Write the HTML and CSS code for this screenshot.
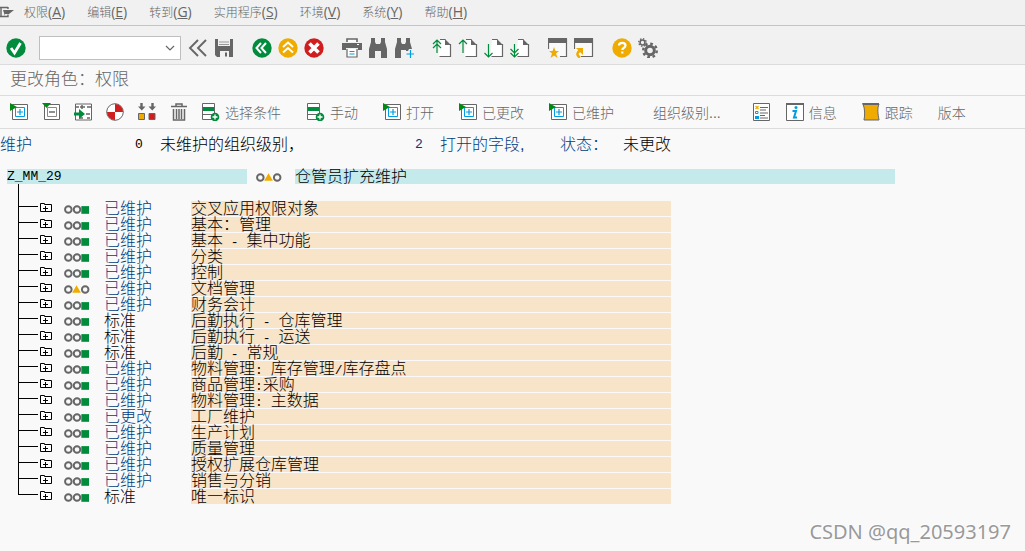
FILE: index.html
```html
<!DOCTYPE html>
<html lang="zh-CN">
<head>
<meta charset="utf-8">
<title>更改角色：权限</title>
<link rel="stylesheet" href="styles.css">
</head>
<body>
<svg class="defs" aria-hidden="true">
  <symbol id="doc" viewBox="0 0 20 20"><path d="M8 1.500h6l4.500 4.500v12.500H6.500" fill="#fff" stroke="none"/><path d="M8 1.500h5.500M18.500 6v12.500H7.500" fill="none" stroke="#666" stroke-width="1.200"/><path d="M13 1l6 6h-6z" fill="#666"/></symbol>
  <symbol id="box" viewBox="0 0 18 18"><path d="M2.500 1.500h15v15h-15z" fill="#fff" stroke="#666"/><path d="M5.500 4.500h9v9h-9z" fill="#fff" stroke="#009de0"/><path d="M10 6v6M7 9h6" stroke="#009de0" stroke-width="1.200"/><path d="M0 0l7 4-7 4z" fill="#008a11"/></symbol>
  <symbol id="add" viewBox="0 0 18 18"><path d="M.5 .5h12v16H.5z" fill="#fff" stroke="#666"/><path d="M1 4h11v4H1z" fill="#008c3c"/><path d="M1 11.500h11" stroke="#666"/><circle cx="13" cy="14" r="4.300" fill="#008c3c"/><path d="M13 11.500v5M10.500 14h5" stroke="#fff" stroke-width="1.300"/></symbol>
  <symbol id="folder" viewBox="0 0 12 9"><path d="M.5 8.500v-8h4v1h7v7z" fill="#fff" stroke="#000"/><path d="M5.500 3v5M3 5.500h5" stroke="#000"/></symbol>
  <symbol id="green" viewBox="0 0 27 10"><g fill="none" stroke="#666" stroke-width="2"><circle cx="4.500" cy="5.500" r="3.400"/><circle cx="13.500" cy="5.500" r="3.400"/></g><path d="M18 2h8v8h-8z" fill="#008c3c"/></symbol>
  <symbol id="yellow" viewBox="0 0 27 10"><g fill="none" stroke="#666" stroke-width="2"><circle cx="4.500" cy="5.500" r="3.400"/><circle cx="22" cy="5.500" r="3.400"/></g><path d="M13 1l4.500 8h-9z" fill="#f0ab00"/></symbol>
</svg>

<nav class="menubar">
  <button class="sysmenu" aria-label="系统菜单"><svg width="14" height="12" viewBox="0 0 14 12"><path d="M0 1.500h8M0 10.500h8v-2M1 1v10M8 1v2" fill="none" stroke="#666" stroke-width="1.400"/><path d="M3 4h11L9 8H5v2z" fill="#666"/></svg></button>
  <button>权限<span>(<u>A</u>)</span></button>
  <button>编辑<span>(<u>E</u>)</span></button>
  <button>转到<span>(<u>G</u>)</span></button>
  <button>实用程序<span>(<u>S</u>)</span></button>
  <button>环境<span>(<u>V</u>)</span></button>
  <button>系统<span>(<u>Y</u>)</span></button>
  <button>帮助<span>(<u>H</u>)</span></button>
</nav>

<div class="toolbar">
  <button aria-label="确认"><svg viewBox="0 0 20 20"><circle cx="10" cy="10" r="9.700" fill="#008c3c"/><path d="M5 10l3.500 5L14.500 5" fill="none" stroke="#fff" stroke-width="2.800"/></svg></button>
  <div class="command">
    <input type="text" aria-label="命令">
    <svg viewBox="0 0 10 6"><path d="M1 1l4 4 4-4" fill="none" stroke="#666" stroke-width="1.200"/></svg>
  </div>
  <div class="group">
    <button aria-label="折叠"><svg viewBox="0 0 20 20"><path d="M10 2l-8 8 8 8M18 2l-8 8 8 8" fill="none" stroke="#666" stroke-width="1.900"/></svg></button>
    <button aria-label="保存"><svg viewBox="0 0 20 20"><path d="M1 1h18v18H3l-2-2z" fill="#666"/><path d="M4 1h12v7H4zM6 13h9v6H6z" fill="#f1f1f1"/><path d="M5 4h10M5 6.500h10" stroke="#999"/><path d="M11 14.500h2v4h-2z" fill="#666"/></svg></button>
  </div>
  <div class="group">
    <button aria-label="返回"><svg viewBox="0 0 20 20"><circle cx="10" cy="10" r="9.700" fill="#008c3c"/><path d="M9 5l-4.500 5L9 15M14 5l-4.500 5 4.500 5" fill="none" stroke="#fff" stroke-width="2"/></svg></button>
    <button aria-label="退出"><svg viewBox="0 0 20 20"><circle cx="10" cy="10" r="9.700" fill="#f0ab00"/><path d="M5 9l5-4.500L15 9M5 14.500L10 10l5 4.500" fill="none" stroke="#fff" stroke-width="2"/></svg></button>
    <button aria-label="取消"><svg viewBox="0 0 20 20"><circle cx="10" cy="10" r="9.700" fill="#d01d1d"/><path d="M5.500 5.500l9 9M14.500 5.500l-9 9" stroke="#fff" stroke-width="3.600"/></svg></button>
  </div>
  <div class="group">
    <button aria-label="打印"><svg viewBox="0 0 20 20"><path d="M5 4V1h10v3" fill="#fff" stroke="#666" stroke-width="1.600"/><path d="M0 5h20v7h-4v-2H4v2H0z" fill="#666"/><path d="M15 6.500h2" stroke="#fff"/><path d="M5 11v8h10v-8" fill="#fff" stroke="#666" stroke-width="1.200"/><path d="M7.500 13.500h5M7.500 16h5" stroke="#009de0"/></svg></button>
    <button aria-label="查找"><svg viewBox="0 0 20 20"><path d="M3 0h4v4l1 2h4l1-2V0h4v4l2 7v9h-6v-7H7v7H1v-9l2-7z" fill="#666"/></svg></button>
    <button aria-label="继续查找"><svg viewBox="0 0 20 20"><path d="M3 0h4v4l1 2h3l1-2V0h4v4l2 7h-3l-1 2h-2v-1H7v8H1v-9l2-7z" fill="#666"/><path d="M16.500 12v8M12.500 16h8" stroke="#009de0" stroke-width="1.200"/></svg></button>
  </div>
  <div class="group">
    <button aria-label="第一页"><svg viewBox="0 0 20 20"><use href="#doc"/><path d="M5 2v13M1 6l4-4 4 4M1 10l4-4 4 4" fill="none" stroke="#008c3c" stroke-width="1.200"/></svg></button>
    <button aria-label="上一页"><svg viewBox="0 0 20 20"><use href="#doc"/><path d="M5 2v13M1 6l4-4 4 4" fill="none" stroke="#008c3c" stroke-width="1.200"/></svg></button>
    <button aria-label="下一页"><svg viewBox="0 0 20 20"><use href="#doc"/><path d="M4.500 6v13M.5 15l4 4 4-4" fill="none" stroke="#008c3c" stroke-width="1.200"/></svg></button>
    <button aria-label="最后一页"><svg viewBox="0 0 20 20"><use href="#doc"/><path d="M4.500 6v13M.5 15l4 4 4-4M.5 11l4 4 4-4" fill="none" stroke="#008c3c" stroke-width="1.200"/></svg></button>
  </div>
  <div class="group">
    <button aria-label="新建会话"><svg viewBox="0 0 20 20"><path d="M.5 11V1h18v17.500H12" fill="#fafafa" stroke="#666" stroke-width="1.200"/><path d="M0 0h19v5H0z" fill="#666"/><path d="M6 9l1.500 4H11l-3 2.500L9.500 20 6 17.500 2.500 20 4 15.500 1 13h3.500z" fill="#f0ab00"/></svg></button>
    <button aria-label="创建快捷方式"><svg viewBox="0 0 20 20"><path d="M.5 11V1h18v17.500H7" fill="#fafafa" stroke="#666" stroke-width="1.200"/><path d="M0 0h19v5H0z" fill="#666"/><path d="M6 19.500c-3.500-2-3.500-5 0-7" fill="none" stroke="#f0ab00" stroke-width="2.600"/><path d="M2 10h7v7z" fill="#f0ab00"/></svg></button>
  </div>
  <div class="group">
    <button aria-label="帮助"><svg viewBox="0 0 20 20"><circle cx="10" cy="10" r="9.700" fill="#f0ab00"/><path d="M7 7.500C7 4 13.500 4 13.500 7.500c0 2.500-3.200 2-3.200 4.500M10.300 13.500v2" fill="none" stroke="#fff" stroke-width="2.200"/></svg></button>
    <button aria-label="自定义布局"><svg viewBox="0 0 20 20"><g fill="none" stroke="#666"><circle cx="12" cy="12.500" r="4.300" stroke-width="3"/><circle cx="12" cy="12.500" r="6.800" stroke-width="2.400" stroke-dasharray="2.670"/><circle cx="4.500" cy="4.500" r="2.400" stroke-width="1.500"/><circle cx="4.500" cy="4.500" r="3.700" stroke-width="1.400" stroke-dasharray="1.450"/></g></svg></button>
  </div>
</div>

<h1 class="title">更改角色：权限</h1>

<div class="appbar">
  <button aria-label="展开"><svg viewBox="0 0 18 18"><use href="#box"/></svg></button>
  <button aria-label="压缩"><svg viewBox="0 0 18 18"><path d="M2.500 1.500h15v15h-15z" fill="#fff" stroke="#666"/><path d="M5.500 4.500h9v9h-9z" fill="#fff" stroke="#888"/><path d="M7 9h6" stroke="#444" stroke-width="1.200"/><path d="M0 0h9L4.500 5z" fill="#008a11"/></svg></button>
  <button aria-label="插入"><svg viewBox="0 0 18 18"><path d="M1.500 1v16h16V1z" fill="#fff" stroke="#666"/><path d="M1 4h4M13 4h4M8 2v4M6 4h5M12 11h4M5 15h4M13 15h3" stroke="#666" stroke-width="1.500"/><path d="M0 9.500h5V6l6 5-6 5v-3.500H0z" fill="#008c3c"/></svg></button>
  <button aria-label="状态"><svg viewBox="0 0 18 18"><circle cx="9" cy="9" r="8.300" fill="#fff" stroke="#666"/><path d="M9 1a8 8 0 0 1 8 8H9zM9 17a8 8 0 0 1-8-8h8z" fill="#d01d1d"/></svg></button>
  <button aria-label="替换"><svg viewBox="0 0 18 18"><path d="M3.500 0v4M14.500 0v4" stroke="#666" stroke-width="2.400"/><path d="M0 3.500h7.500L3.800 7.500zM10.500 3.500H18l-3.700 4z" fill="#666"/><path d="M.5 10.500h6v6h-6z" fill="#f0ab00" stroke="#666"/><path d="M11 10.500h6v6h-6z" fill="#d01d1d" stroke="#666"/></svg></button>
  <button aria-label="删除"><svg viewBox="0 0 18 18"><path d="M1 3.500h16M6 3V1h6v2M3.500 6v11h11V6M6.500 6v10M9 6v10M11.500 6v10" fill="none" stroke="#666" stroke-width="1.500"/></svg></button>
  <button><svg viewBox="0 0 18 18"><use href="#add"/></svg>选择条件</button>
  <div class="texts">
    <button><svg viewBox="0 0 18 18"><use href="#add"/></svg>手动</button>
    <button><svg viewBox="0 0 18 18"><use href="#box"/></svg>打开</button>
    <button><svg viewBox="0 0 18 18"><use href="#box"/></svg>已更改</button>
    <button><svg viewBox="0 0 18 18"><use href="#box"/></svg>已维护</button>
    <button class="wide">组织级别...</button>
    <button aria-label="图例"><svg viewBox="0 0 18 18"><path d="M.5 .5h16v17H.5z" fill="#fff" stroke="#666"/><path d="M7 4.500h8M7 7h6M7 10h8M7 12.500h5M7 15h8" stroke="#666"/><path d="M2.500 3l3 3M5.500 3l-3 3" stroke="#f0ab00" stroke-width="1.200"/><path d="M2.500 8.500h2.500v2H2.500z" fill="none" stroke="#009de0"/><path d="M2 13h4v3H2z" fill="#009de0"/></svg></button>
    <button class="info"><svg viewBox="0 0 18 18"><path d="M.5 1h17v16.500H.5z" fill="#fff" stroke="#666"/><path d="M0 0h18v2H0z" fill="#666"/><circle cx="10" cy="4.500" r="1.500" fill="#009de0"/><path d="M6.500 8H10l-2 6.500h3" fill="none" stroke="#009de0" stroke-width="2"/></svg>信息</button>
    <button><svg viewBox="0 0 18 18"><path d="M1 1h16c-2 5-1 10 0 16H2C3 12 3 6 1 1z" fill="#f0ab00" stroke="#666"/><path d="M0 0h17v2H1z" fill="#666"/></svg>跟踪</button>
    <button>版本</button>
  </div>
</div>

<main class="content">
  <div class="summary">
    <span class="blue s-mode">维护</span><span class="s-num">0</span><span class="s-org">未维护的组织级别，</span><span class="blue s-num">2</span><span class="blue s-open">打开的字段,</span><span class="blue s-state">状态：</span><span>未更改</span>
  </div>

  <div class="role">
    <span class="role-id">Z_MM_29</span>
    <svg class="light" role="img" aria-label="黄灯"><use href="#yellow"/></svg>
    <span class="role-name">仓管员扩充维护</span>
  </div>

  <ul class="tree">
    <li><button aria-label="展开"><svg><use href="#folder"/></svg></button><svg class="light"><use href="#green"/></svg><span class="state blue">已维护</span><span class="name">交叉应用权限对象</span></li>
    <li><button aria-label="展开"><svg><use href="#folder"/></svg></button><svg class="light"><use href="#green"/></svg><span class="state blue">已维护</span><span class="name">基本：管理</span></li>
    <li><button aria-label="展开"><svg><use href="#folder"/></svg></button><svg class="light"><use href="#green"/></svg><span class="state blue">已维护</span><span class="name">基本<i> - </i>集中功能</span></li>
    <li><button aria-label="展开"><svg><use href="#folder"/></svg></button><svg class="light"><use href="#green"/></svg><span class="state blue">已维护</span><span class="name">分类</span></li>
    <li><button aria-label="展开"><svg><use href="#folder"/></svg></button><svg class="light"><use href="#green"/></svg><span class="state blue">已维护</span><span class="name">控制</span></li>
    <li><button aria-label="展开"><svg><use href="#folder"/></svg></button><svg class="light"><use href="#yellow"/></svg><span class="state blue">已维护</span><span class="name">文档管理</span></li>
    <li><button aria-label="展开"><svg><use href="#folder"/></svg></button><svg class="light"><use href="#green"/></svg><span class="state blue">已维护</span><span class="name">财务会计</span></li>
    <li><button aria-label="展开"><svg><use href="#folder"/></svg></button><svg class="light"><use href="#green"/></svg><span class="state">标准</span><span class="name">后勤执行<i> - </i>仓库管理</span></li>
    <li><button aria-label="展开"><svg><use href="#folder"/></svg></button><svg class="light"><use href="#green"/></svg><span class="state">标准</span><span class="name">后勤执行<i> - </i>运送</span></li>
    <li><button aria-label="展开"><svg><use href="#folder"/></svg></button><svg class="light"><use href="#green"/></svg><span class="state">标准</span><span class="name">后勤<i> - </i>常规</span></li>
    <li><button aria-label="展开"><svg><use href="#folder"/></svg></button><svg class="light"><use href="#green"/></svg><span class="state blue">已维护</span><span class="name">物料管理<i>: </i>库存管理<i>/</i>库存盘点</span></li>
    <li><button aria-label="展开"><svg><use href="#folder"/></svg></button><svg class="light"><use href="#green"/></svg><span class="state blue">已维护</span><span class="name">商品管理<i>:</i>采购</span></li>
    <li><button aria-label="展开"><svg><use href="#folder"/></svg></button><svg class="light"><use href="#green"/></svg><span class="state blue">已维护</span><span class="name">物料管理<i>: </i>主数据</span></li>
    <li><button aria-label="展开"><svg><use href="#folder"/></svg></button><svg class="light"><use href="#green"/></svg><span class="state blue">已更改</span><span class="name">工厂维护</span></li>
    <li><button aria-label="展开"><svg><use href="#folder"/></svg></button><svg class="light"><use href="#green"/></svg><span class="state blue">已维护</span><span class="name">生产计划</span></li>
    <li><button aria-label="展开"><svg><use href="#folder"/></svg></button><svg class="light"><use href="#green"/></svg><span class="state blue">已维护</span><span class="name">质量管理</span></li>
    <li><button aria-label="展开"><svg><use href="#folder"/></svg></button><svg class="light"><use href="#green"/></svg><span class="state blue">已维护</span><span class="name">授权扩展仓库管理</span></li>
    <li><button aria-label="展开"><svg><use href="#folder"/></svg></button><svg class="light"><use href="#green"/></svg><span class="state blue">已维护</span><span class="name">销售与分销</span></li>
    <li><button aria-label="展开"><svg><use href="#folder"/></svg></button><svg class="light"><use href="#green"/></svg><span class="state">标准</span><span class="name">唯一标识</span></li>
  </ul>
</main>
<div class="watermark">CSDN @qq_20593197</div>
</body>
</html>
```
FILE: styles.css
```css
* { box-sizing: border-box; }

body {
  margin: 0;
  min-height: 100vh;
  position: relative;
  background: #f9f9f9;
  color: #000;
  font-family: "Liberation Sans", "Noto Sans CJK SC", sans-serif;
  font-weight: 300;
}

.defs { position: absolute; width: 0; height: 0; }

button {
  display: flex;
  align-items: center;
  flex: none;
  padding: 0;
  border: 0;
  background: none;
  color: #666;
  font: inherit;
  white-space: nowrap;
}

.menubar {
  display: flex;
  align-items: center;
  gap: 22px;
  height: 26px;
  padding-bottom: 2px;
  background: #f1f1f1;
  border-bottom: 1px solid #c4c4c4;
  font-size: 12px;
}
.menubar span { font: 14px "Open Sans", sans-serif; }
.menubar .sysmenu { margin-right: -12px; }

.toolbar {
  display: flex;
  align-items: center;
  gap: 18px;
  height: 39px;
  padding: 5px 6px 0;
  background: #f1f1f1;
  border-bottom: 1px solid #dcdcdc;
}
.toolbar button svg { width: 20px; height: 20px; }
.group { display: flex; gap: 6px; }
.command {
  display: flex;
  position: relative;
  width: 142px;
  margin: 0 -11px 0 -5px;
}
.command input {
  width: 100%;
  height: 24px;
  padding: 0 24px 0 6px;
  border: 1px solid #bfbfbf;
  background: #fff;
}
.command svg {
  position: absolute;
  right: 6px;
  top: 9px;
  width: 10px;
  height: 6px;
}

.title {
  margin: 0;
  height: 31px;
  padding-left: 10px;
  border-bottom: 1px solid #dcdcdc;
  color: #666;
  font-size: 17px;
  font-weight: 300;
  line-height: 30px;
}

.appbar {
  display: flex;
  align-items: center;
  gap: 14px;
  height: 33px;
  padding-left: 10px;
  border-bottom: 1px solid #dcdcdc;
  font-size: 14px;
}
.appbar button { gap: 5px; }
.appbar svg { width: 18px; height: 18px; }
.texts { display: flex; gap: 25px; margin-left: 12px; }
.texts .wide { margin-left: 14px; }
.texts button:nth-child(6) { margin-left: 7px; }
.texts .info { margin-left: -10px; }

.content { font-size: 16px; line-height: 15px; white-space: nowrap; }
.blue { color: #003c80; }

.summary { display: flex; padding-top: 8px; height: 40px; }
.s-mode { width: 135px; }
.s-num { width: 25px; font: 13px/16px "Liberation Mono", monospace; }
.s-org { width: 255px; }
.s-open { width: 120px; }
.s-state { width: 63px; }

.role { display: flex; align-items: center; height: 15px; margin-left: 7px; }
.role-id, .role-name { height: 15px; background: #c5eaec; }
.role-id { flex: 0 1 240px; font: 13px/16px "Liberation Mono", monospace; }
.role .light { margin: 0 13px 0 9px; }
.role-name { flex: 0 1 600px; }
.light { flex: none; width: 26px; height: 10px; }

.tree {
  list-style: none;
  margin: 0 0 0 18px;
  padding: 17px 0 0;
  background: linear-gradient(#000, #000) 0 0 / 1px 17px no-repeat;
}
.tree li {
  display: flex;
  position: relative;
  height: 16px;
}
.tree li::before {
  content: "";
  position: absolute;
  left: 0;
  top: 0;
  width: 1px;
  height: 100%;
  background: #000;
}
.tree li:last-child::before { height: 6px; }
.tree li::after {
  content: "";
  position: absolute;
  left: 0;
  top: 5px;
  width: 20px;
  height: 1px;
  background: #000;
}
.tree button { align-items: flex-start; margin-left: 22px; padding-top: 2px; }
.tree button svg { width: 12px; height: 9px; }
.tree .light { margin: 3px 14px 0 12px; }
.state { width: 87px; }
.name { flex: 0 1 480px; height: 15px; background: #f8e4c8; }
.name i { font: 13px/15px "Liberation Mono", monospace; white-space: pre; }

.watermark {
  position: absolute;
  right: 14px;
  bottom: 7px;
  color: #999;
  font: 20px/24px "Noto Sans", sans-serif;
  text-shadow: -1px -1px 0 #fff;
}
```
